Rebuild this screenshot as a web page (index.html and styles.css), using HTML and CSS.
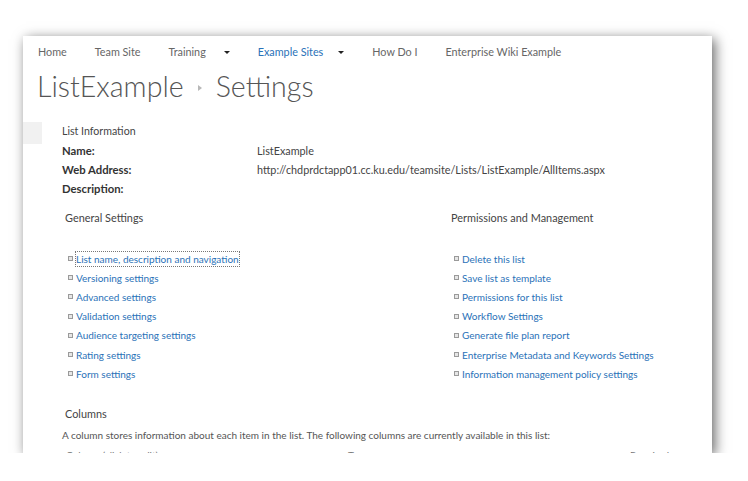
FILE: index.html
```html
<!DOCTYPE html>
<html>
<head>
<meta charset="utf-8">
<link rel="stylesheet" href="styles.css">
</head>
<body>
<div class="panel">
  <nav class="topnav">
    <span class="nav-item">Home</span>
    <span class="nav-item">Team Site</span>
    <span class="nav-item">Training<span class="caret"></span></span>
    <span class="nav-item active">Example Sites<span class="caret"></span></span>
    <span class="nav-item">How Do I</span>
    <span class="nav-item">Enterprise Wiki Example</span>
  </nav>
  <h1 class="title">ListExample<span class="crumb-sep"></span>Settings</h1>

  <div class="info">
    <div class="side-tab"></div>
    <div class="info-body">
      <div class="section-label">List Information</div>
      <div class="props">
        <div class="prop-name">Name:</div><div class="prop-val">ListExample</div>
        <div class="prop-name">Web Address:</div><div class="prop-val">http://chdprdctapp01.cc.ku.edu/teamsite/Lists/ListExample/AllItems.aspx</div>
        <div class="prop-name">Description:</div><div class="prop-val"></div>
      </div>
    </div>
  </div>

  <div class="settings">
    <div class="settings-col">
      <div class="col-head">General Settings</div>
      <ul class="links">
        <li><a class="focused">List name, description and navigation</a></li>
        <li><a>Versioning settings</a></li>
        <li><a>Advanced settings</a></li>
        <li><a>Validation settings</a></li>
        <li><a>Audience targeting settings</a></li>
        <li><a>Rating settings</a></li>
        <li><a>Form settings</a></li>
      </ul>
    </div>
    <div class="settings-col">
      <div class="col-head">Permissions and Management</div>
      <ul class="links">
        <li><a>Delete this list</a></li>
        <li><a>Save list as template</a></li>
        <li><a>Permissions for this list</a></li>
        <li><a>Workflow Settings</a></li>
        <li><a>Generate file plan report</a></li>
        <li><a>Enterprise Metadata and Keywords Settings</a></li>
        <li><a>Information management policy settings</a></li>
      </ul>
    </div>
  </div>

  <div class="columns">
    <div class="col-head">Columns</div>
    <div class="columns-desc">A column stores information about each item in the list. The following columns are currently available in this list:</div>
    <div class="columns-header">
      <span class="ch-name">Column (click to edit)</span>
      <span class="ch-type">Type</span>
      <span class="ch-req">Required</span>
    </div>
  </div>
</div>
</body>
</html>
```

FILE: styles.css
```css
html, body {
  margin: 0;
  padding: 0;
  background: #ffffff;
}
body {
  font-family: Lato, "Open Sans", "DejaVu Sans", sans-serif;
  font-size: 10px;
  color: #444444;
  padding-top: 36px;
  padding-left: 23px;
}
.panel {
  width: 689px;
  height: 417px;
  overflow: hidden;
  background: #ffffff;
  box-shadow: 3px 3px 12px rgba(0, 0, 0, 0.6);
}
.topnav {
  display: flex;
  height: 32px;
  line-height: 32px;
  padding-left: 15px;
  color: #666666;
  font-size: 10.8px;
}
.nav-item { display: flex; align-items: center; white-space: nowrap; margin-right: 28px; }
.nav-item.active { color: #2a72b8; }
.caret {
  display: inline-block;
  margin-left: 18px;
  width: 0;
  height: 0;
  border-left: 3px solid transparent;
  border-right: 3px solid transparent;
  border-top: 3px solid #222222;
}
.nav-item.active .caret { margin-left: 15px; }
.title {
  margin: 0;
  padding-left: 14px;
  font-size: 28.6px;
  line-height: 36px;
  font-weight: 300;
  color: #555555;
  display: flex;
  align-items: center;
  white-space: nowrap;
}
.crumb-sep {
  display: inline-block;
  width: 0;
  height: 0;
  margin: 4px 14px 0 14px;
  border-top: 3px solid transparent;
  border-bottom: 3px solid transparent;
  border-left: 4px solid #b8b8b8;
}
.info {
  display: flex;
  margin-top: 17px;
}
.side-tab {
  width: 19px;
  height: 22px;
  margin-top: 1px;
  background: #f1f1f1;
  flex: none;
}
.info-body { margin-left: 20px; flex: 1; }
.section-label { line-height: 20px; font-size: 10.6px; }
.props {
  display: grid;
  grid-template-columns: 195px 1fr;
  line-height: 19px;
}
.prop-name { font-weight: bold; color: #333333; font-size: 11.3px; }
.prop-val { color: #444444; min-height: 19px; font-size: 10.8px; }
.settings {
  display: grid;
  grid-template-columns: 386px 1fr;
  margin-top: 10px;
  padding-left: 42px;
}
.col-head { line-height: 20px; color: #444444; font-size: 10.9px; }
.links {
  list-style: none;
  margin: 21px 0 0 0;
  padding: 0 0 0 3px;
}
.links li {
  display: flex;
  align-items: center;
  height: 19.2px;
}
.links li::before {
  content: "";
  display: inline-block;
  width: 3px;
  height: 3px;
  border: 1px solid #9a9a9a;
  background: #e6e6e6;
  margin-right: 3px;
  flex: none;
}
.links a {
  color: #2a72b8;
  white-space: nowrap;
  line-height: 14px;
}
.links a.focused { outline: 1px dotted #777777; }
.columns {
  margin-top: 21px;
  padding-left: 39px;
}
.columns .col-head { padding-left: 3px; }
.columns-desc { line-height: 22px; color: #555555; }
.columns-header {
  display: flex;
  line-height: 18px;
  color: #777777;
  padding-left: 4px;
}
.ch-name { width: 282px; }
.ch-type { width: 282px; }
```
